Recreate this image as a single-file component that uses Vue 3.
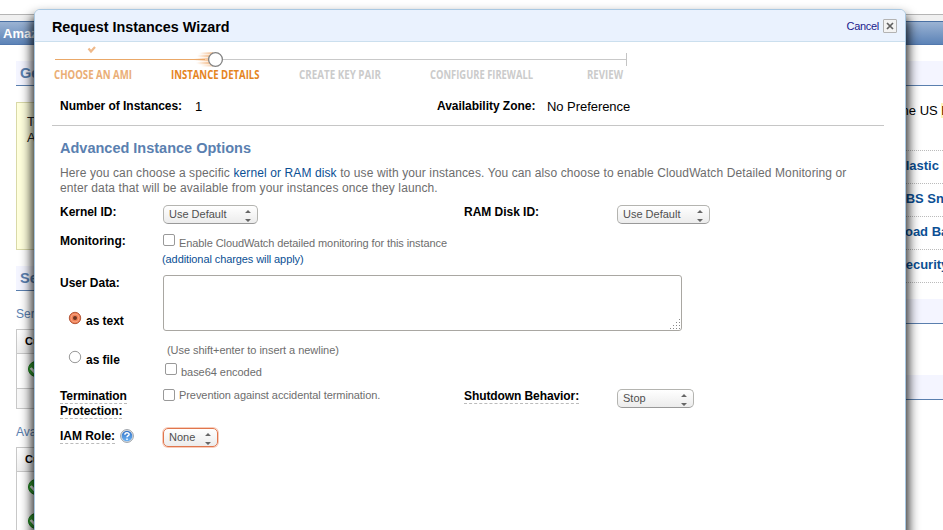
<script setup>
const steps = [
  { label: 'CHOOSE AN AMI', x: 54, width: 78, state: 'done' },
  { label: 'INSTANCE DETAILS', x: 171, width: 88.5, state: 'current' },
  { label: 'CREATE KEY PAIR', x: 299, width: 82, state: 'next' },
  { label: 'CONFIGURE FIREWALL', x: 430, width: 103, state: 'next' },
  { label: 'REVIEW', x: 587, width: 36, state: 'next' },
]
const links = ['Elastic IPs', 'EBS Snapshots', 'Load Balancers', 'Security Groups']
const grip = [[9, 0], [6, 3], [9, 3], [3, 6], [6, 6], [9, 6], [0, 9], [3, 9], [6, 9], [9, 9]]
</script>

<template>
  <div class="screen">
    <div class="topstrip"></div>
    <div class="navbar">Amazon EC2</div>
    <div class="columns">
      <main class="left">
        <h2 class="band">Getting Started</h2>
        <div class="notice">To start using<br />Amazon EC2</div>
        <h2 class="band">Service Health</h2>
        <p class="sub">Service Status</p>
        <div class="table">
          <div class="thead">Current</div>
          <div class="trow first"><svg class="ok" viewBox="0 0 16 16"><circle cx="8" cy="8" r="7.5" fill="#35a332" stroke="#177a18" /><path d="M2.8 7l4 4.5 6-8" fill="none" stroke="#fff" stroke-width="2.6" /></svg></div>
          <div class="tfoot"></div>
        </div>
        <p class="sub zone">Availability Zone</p>
        <div class="table">
          <div class="thead">Current</div>
          <div v-for="n in 2" :key="n" class="trow"><svg class="ok" viewBox="0 0 16 16"><circle cx="8" cy="8" r="7.5" fill="#35a332" stroke="#177a18" /><path d="M2.8 7l4 4.5 6-8" fill="none" stroke="#fff" stroke-width="2.6" /></svg></div>
        </div>
      </main>
      <aside class="right">
        <h2 class="band"></h2>
        <div class="region">the US <mark>East</mark></div>
        <div v-for="l in links" :key="l" class="link">{{ l }}</div>
        <h2 class="band second"></h2>
        <h2 class="band third"></h2>
      </aside>
    </div>

    <section class="dialog">
      <header class="head">
        <h1>Request Instances Wizard</h1>
        <span class="cancel">Cancel</span>
        <span class="close"><svg width="8" height="8" viewBox="0 0 8 8"><path d="M1 1l6 6M7 1l-6 6" stroke="#606060" stroke-width="1.7" /></svg></span>
      </header>

      <svg class="steps" width="870" height="44" viewBox="35 42 870 44">
        <defs>
          <linearGradient id="trail"><stop offset="0" stop-color="#f2a765" stop-opacity="0" /><stop offset="1" stop-color="#f0a35e" stop-opacity=".55" /></linearGradient>
        </defs>
        <rect x="55" y="59" width="150" height="1" fill="#eaa868" />
        <rect x="222" y="59" width="405" height="1" fill="#c9c9c9" />
        <rect x="626" y="53" width="1" height="13" fill="#c4c4c4" />
        <path d="M88.5 48.5l2.5 3L95 47" fill="none" stroke="#efb98a" stroke-width="2.2" />
        <g fill="url(#trail)">
          <rect x="200" y="52" width="13" height="2" /><rect x="197" y="55" width="13" height="2" />
          <rect x="194" y="58" width="15" height="3" /><rect x="196" y="62" width="14" height="2" /><rect x="201" y="65" width="12" height="1.5" />
          <rect x="198" y="53" width="14" height="12" opacity=".6" />
        </g>
        <circle cx="215.5" cy="59.5" r="6.9" fill="#fff" stroke="#828282" stroke-width="1.3" />
        <text v-for="s in steps" :key="s.label" :class="s.state" :x="s.x" y="79" :textLength="s.width" lengthAdjust="spacingAndGlyphs">{{ s.label }}</text>
      </svg>

      <div class="summary">
        <b>Number of Instances:</b><span class="count">1</span>
        <b>Availability Zone:</b><span class="value">No Preference</span>
      </div>

      <div class="options">
        <h3>Advanced Instance Options</h3>
        <p class="intro">Here you can choose a specific <a>kernel or RAM disk</a> to use with your instances. You can also choose to enable CloudWatch Detailed Monitoring or<br />enter data that will be available from your instances once they launch.</p>

        <div class="row kernel">
          <b>Kernel ID:</b>
          <div><span class="select w95">Use Default<svg width="6" height="12" viewBox="0 0 6 12"><path d="M0 3L3 0l3 3zM0 9h6L3 12z" /></svg></span></div>
          <b>RAM Disk ID:</b>
          <div><span class="select w93">Use Default<svg width="6" height="12" viewBox="0 0 6 12"><path d="M0 3L3 0l3 3zM0 9h6L3 12z" /></svg></span></div>
        </div>

        <div class="row monitoring">
          <b>Monitoring:</b>
          <div>
            <div class="option low"><i class="box"></i><span>Enable CloudWatch detailed monitoring for this instance</span></div>
            <a class="charges">(additional charges will apply)</a>
          </div>
        </div>

        <div class="row userdata">
          <div class="modes">
            <b>User Data:</b>
            <div class="mode"><svg width="14" height="14" viewBox="0 0 14 14"><circle cx="7" cy="7" r="5.7" fill="#f08055" stroke="#b5583a" /><circle cx="7" cy="7" r="4" fill="none" stroke="#f6a17f" /><circle cx="7" cy="7" r="2" fill="#6b3523" /></svg><b>as text</b></div>
            <div class="mode file"><svg width="14" height="14" viewBox="0 0 14 14"><circle cx="7" cy="7" r="5.7" fill="#fff" stroke="#999" /></svg><b>as file</b></div>
          </div>
          <div class="entry">
            <div class="textarea"><svg width="10" height="10" viewBox="0 0 10 10"><rect v-for="(g, i) in grip" :key="i" :x="g[0]" :y="g[1]" width="1" height="1" fill="#888" /></svg></div>
            <div class="hint">(Use shift+enter to insert a newline)</div>
            <div class="option base64"><i class="box"></i><span>base64 encoded</span></div>
          </div>
        </div>

        <div class="row termination">
          <b><u>Termination</u><br /><u>Protection:</u></b>
          <div class="option prevent"><i class="box"></i><span>Prevention against accidental termination.</span></div>
          <b><u>Shutdown Behavior:</u></b>
          <div><span class="select w77">Stop<svg width="6" height="12" viewBox="0 0 6 12"><path d="M0 3L3 0l3 3zM0 9h6L3 12z" /></svg></span></div>
        </div>

        <div class="row iam">
          <b class="role"><u>IAM Role:</u>
            <svg width="14" height="14" viewBox="0 0 14 14">
              <defs><linearGradient id="help" x2="0" y2="1"><stop offset="0" stop-color="#2f6fc4" /><stop offset="1" stop-color="#6fb5f5" /></linearGradient></defs>
              <circle cx="7" cy="7" r="6.4" fill="#e4e7ea" stroke="#8e959c" stroke-width=".9" /><circle cx="7" cy="7" r="5.3" fill="url(#help)" />
              <path d="M4.9 5.7C4.9 3.2 9.2 3.3 9.1 5.5 9 6.7 7 6.7 7 8.3M7 9.4v1.5" fill="none" stroke="#fff" stroke-width="1.5" />
            </svg>
          </b>
          <div><span class="select w55 focus">None<svg width="6" height="12" viewBox="0 0 6 12"><path d="M0 3L3 0l3 3zM0 9h6L3 12z" /></svg></span></div>
        </div>
      </div>
    </section>
  </div>
</template>

<style>
body { margin: 0; background: #fff; overflow: hidden; }
</style>

<style scoped>
* { box-sizing: border-box; }
h1, h2, h3, p { margin: 0; }
.screen { position: relative; width: 943px; height: 530px; overflow: hidden; padding-top: 14px; background: #fff; font-family: "Liberation Sans", Arial, sans-serif; white-space: nowrap; }
.topstrip { height: 7px; border-top: 1px solid #b5b5b5; background: #f0f0f0; }
.navbar { height: 24px; padding-left: 3px; border-top: 1px solid #4a70a3; border-bottom: 1px solid #5278ad; background: linear-gradient(#9bb3d3, #5c83b7); color: #fff; font-size: 13px; font-weight: bold; line-height: 23px; }
.columns { display: flex; justify-content: space-between; padding-top: 16px; }
.left { width: 300px; padding-left: 16px; }
.right { width: 83px; overflow: hidden; }
.band { height: 25px; padding-left: 4px; border-bottom: 1px solid #5a7fae; background: #f4f5ff; color: #5a80b0; font-size: 14.5px; line-height: 25px; }
.notice { height: 148px; margin: 16px 0; padding: 11px 10px; border: 1px solid #d9d9a8; background: #ffffdd; font-size: 13px; line-height: 16px; color: #222; }
.sub { margin-top: 15px; font-size: 12px; line-height: 16px; color: #5a80b0; }
.table { margin-top: 7px; border: 1px solid #c8c8c8; border-bottom: 0; }
.thead { height: 24px; padding-left: 8px; border-bottom: 1px solid #c8c8c8; background: linear-gradient(#fff, #eee); font-size: 11px; font-weight: bold; line-height: 23px; }
.trow { display: flex; align-items: center; height: 34px; padding: 0 0 4px 11px; }
.trow.first { height: 35px; border-bottom: 1px solid #c8c8c8; }
.tfoot { height: 20px; border-bottom: 1px solid #c8c8c8; background: #f7f7f7; }
.ok { width: 16px; height: 16px; }
.zone { margin-top: 15px; }
.region { height: 65px; padding: 17px 0 0 38px; border-bottom: 1px dotted #bbb; font-size: 13px; line-height: 16px; }
.region mark { background: #fff3b8; color: inherit; }
.link { height: 33px; padding-left: 37px; border-bottom: 1px dotted #bbb; color: #0b4f94; font-size: 13px; font-weight: bold; line-height: 29px; }
.second { margin-top: 16px; }
.third { margin-top: 51px; }

.dialog { position: absolute; left: 34px; top: 9px; width: 872px; height: 560px; border: 1px solid #a9c8e2; border-radius: 6px; background: #fff; box-shadow: 0 9px 12px 2px rgba(0, 0, 0, .93); }
.head { display: flex; align-items: center; height: 32px; padding: 0 8px 0 17px; border-bottom: 1px solid #cbdfee; border-radius: 5px 5px 0 0; background: #eaf2fe; }
h1 { flex: 1; font-size: 14.35px; line-height: 18px; padding-top: 3px; }
.cancel { padding: 1px 4px 0 0; color: #1a1a8c; font-size: 11px; letter-spacing: -.3px; }
.close { display: flex; align-items: center; justify-content: center; width: 14px; height: 14px; margin-top: 1px; border: 1px solid #b3b3b3; border-radius: 1px; background: #f3f3f3; }
.steps { display: block; }
.steps text { font: bold 11.5px "Open Sans", "Noto Sans", sans-serif; fill: #cbcbcb; }
.steps .done { fill: #eaae76; }
.steps .current { fill: #e5851f; }
.summary { display: grid; grid-template-columns: 135px 242px 110px 1fr; height: 40px; margin: 0 21px 0 17px; padding: 13px 0 0 8px; border-bottom: 1px solid #c6c6c6; font-size: 13px; line-height: 16px; }
.value { letter-spacing: -.05px; }
b { font-size: 12px; line-height: 14px; letter-spacing: -.03px; }
.options { padding: 14px 0 0 25px; }
h3 { height: 16px; font-size: 14.5px; line-height: 16px; color: #5a80b0; }
.intro { margin: 10px 0 9px; height: 30px; color: #6d6d6d; font-size: 12px; line-height: 15px; letter-spacing: .107px; }
a { color: #0b4f94; }
.row { display: grid; grid-template-columns: 103px 301px 153px 1fr; align-items: start; color: #000; }
.kernel { height: 29px; }
.monitoring { height: 41px; }
.userdata { height: 114px; }
.termination { height: 39px; }
.select { display: flex; align-items: center; justify-content: space-between; height: 19px; padding: 0 6px 1px 5px; border: 1px solid #b4b4b0; border-bottom-color: #999; border-radius: 5px; background: linear-gradient(#fff, #ececec); color: #505050; font-size: 11px; line-height: 14px; }
.select svg { fill: #666; margin-top: 3px; }
.w95 { width: 95px; }
.w93 { width: 93px; }
.w77 { width: 77px; }
.w55 { width: 55px; }
.focus { border-color: #e0764d; box-shadow: 0 0 0 1px #f8cdbb; }
.option { display: flex; color: #6d6d6d; font-size: 11px; line-height: 14px; letter-spacing: -.09px; }
.box { width: 12px; height: 12px; margin-right: 4px; border: 1px solid #999; border-radius: 2px; background: #fff; }
.option.low span { padding-top: 2px; }
.option.prevent { letter-spacing: -.07px; }
.option.prevent span { margin-top: -1px; }
.charges { display: block; margin-top: 2px; margin-left: -1px; font-size: 11px; line-height: 14px; letter-spacing: -.09px; }
.modes { padding-top: 1px; display: flex; flex-direction: column; }
.mode { display: flex; gap: 4px; margin-top: 21px; padding-left: 8px; height: 18px; }
.mode b { padding-top: 3px; }
.mode.file { margin-top: 21px; }
.textarea { display: flex; align-items: flex-end; justify-content: flex-end; width: 519px; height: 56px; padding: 1px; border: 1px solid #a9a7a2; border-radius: 3px; }
.hint { margin: 12px 0 0 4px; color: #6d6d6d; font-size: 11px; line-height: 14px; letter-spacing: -.04px; }
.base64 { margin: 6px 0 0 2px; letter-spacing: -.04px; }
.base64 span { padding-top: 2px; }
.termination b { line-height: 15px; letter-spacing: -.09px; }
u { display: inline-block; height: 15px; border-bottom: 1px dashed #bbb; text-decoration: none; line-height: 14px; vertical-align: top; }
.role { display: flex; padding-top: 1px; gap: 5px; }
</style>
